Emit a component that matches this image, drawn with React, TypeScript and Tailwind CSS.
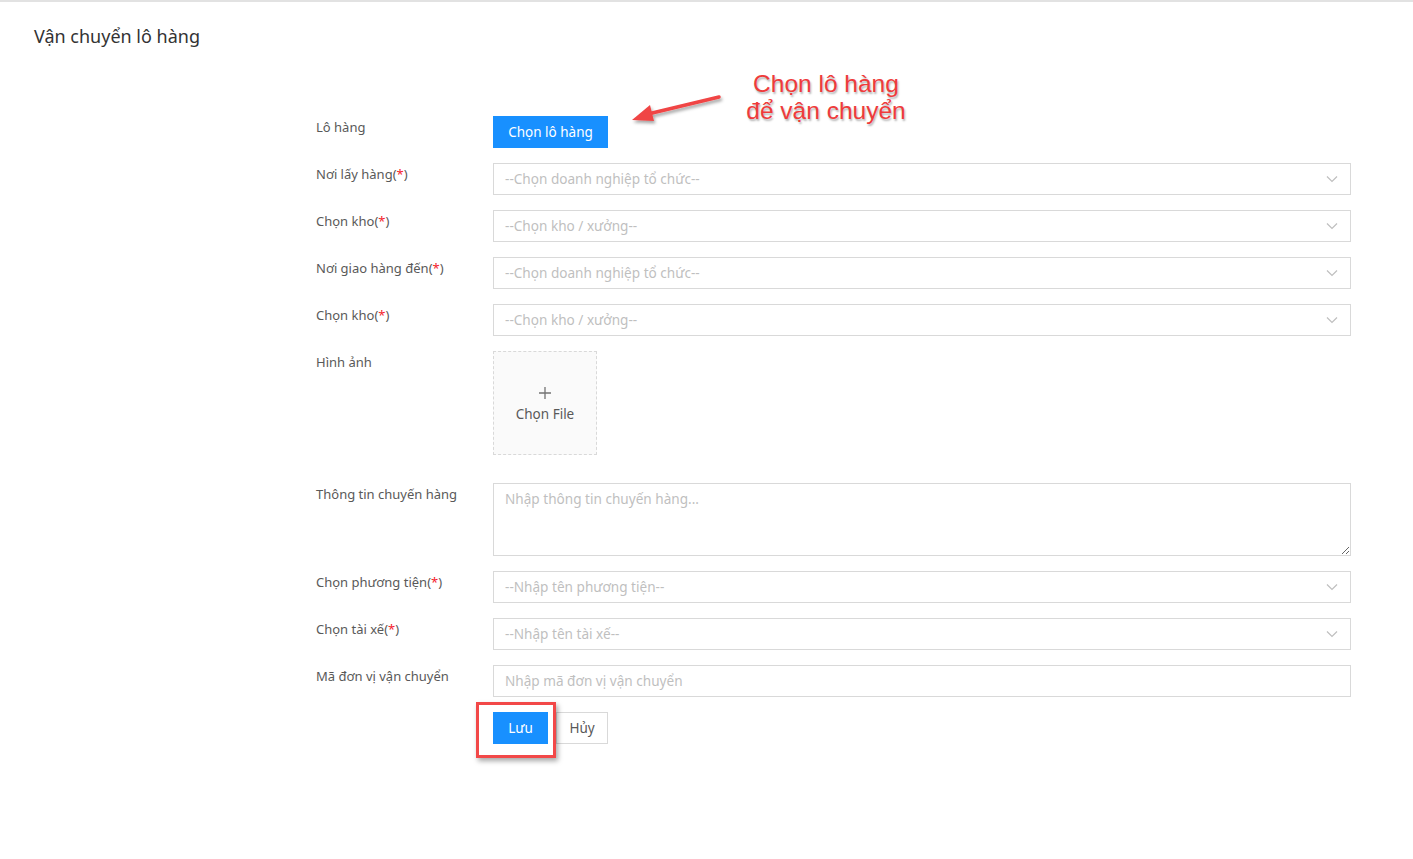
import React from "react";

const Chevron = () => (
  <svg width="12" height="8" viewBox="0 0 12 8" className="shrink-0">
    <path d="M1 1.5 L6 6.5 L11 1.5" fill="none" stroke="#bfbfbf" strokeWidth="1.2" />
  </svg>
);

const Label = ({ text, req }: { text: string; req?: boolean }) => (
  <div className="w-[177px] shrink-0 text-[13px] leading-[22px] text-[#595959]">
    {text}
    {req && (
      <>
        (<span className="text-[#f5222d]">*</span>)
      </>
    )}
  </div>
);

const Select = ({ ph }: { ph: string }) => (
  <div className="flex h-[32px] w-[858px] items-center justify-between border border-[#d9d9d9] bg-white pl-[11px] pr-[12px] text-[13.6px] text-[#bfbfbf]">
    <span>{ph}</span>
    <Chevron />
  </div>
);

export default function App() {
  return (
    <div
      className="relative min-h-[859px] w-[1413px] border-t-2 border-[#e2e2e2] bg-white"
      style={{ fontFamily: '"Noto Sans", "Open Sans", sans-serif' }}
    >
      <div className="pl-[34px] pt-[20px] text-[18px] leading-[28px] text-[#333]">Vận chuyển lô hàng</div>

      <div className="ml-[316px] mt-[66px] flex flex-col">
        <div className="mb-[15px] flex">
          <Label text="Lô hàng" />
          <div className="flex h-[32px] w-[115px] items-center justify-center bg-[#1890ff] text-[13.5px] text-white">
            Chọn lô hàng
          </div>
        </div>
        <div className="mb-[15px] flex">
          <Label text="Nơi lấy hàng" req />
          <Select ph="--Chọn doanh nghiệp tổ chức--" />
        </div>
        <div className="mb-[15px] flex">
          <Label text="Chọn kho" req />
          <Select ph="--Chọn kho / xưởng--" />
        </div>
        <div className="mb-[15px] flex">
          <Label text="Nơi giao hàng đến" req />
          <Select ph="--Chọn doanh nghiệp tổ chức--" />
        </div>
        <div className="mb-[15px] flex">
          <Label text="Chọn kho" req />
          <Select ph="--Chọn kho / xưởng--" />
        </div>
        <div className="mb-[28px] flex">
          <Label text="Hình ảnh" />
          <div className="flex h-[104px] w-[104px] flex-col items-center justify-center border border-dashed border-[#d9d9d9] bg-[#fafafa] pt-[4px] text-[#595959]">
            <svg width="14" height="14" viewBox="0 0 14 14">
              <path d="M7 1 V13 M1 7 H13" stroke="#737373" strokeWidth="1.3" />
            </svg>
            <div className="mt-[4px] text-[13.5px] leading-[20px]">Chọn File</div>
          </div>
        </div>
        <div className="mb-[15px] flex">
          <Label text="Thông tin chuyến hàng" />
          <textarea
            className="block h-[73px] w-[858px] border border-[#d9d9d9] px-[11px] py-[5px] text-[13.6px] text-[#595959] outline-none placeholder:text-[#bfbfbf]"
            placeholder="Nhập thông tin chuyến hàng..."
          />
        </div>
        <div className="mb-[15px] flex">
          <Label text="Chọn phương tiện" req />
          <Select ph="--Nhập tên phương tiện--" />
        </div>
        <div className="mb-[15px] flex">
          <Label text="Chọn tài xế" req />
          <Select ph="--Nhập tên tài xế--" />
        </div>
        <div className="mb-[15px] flex">
          <Label text="Mã đơn vị vận chuyển" />
          <div className="flex h-[32px] w-[858px] items-center border border-[#d9d9d9] px-[11px] text-[13.6px] text-[#bfbfbf]">
            Nhập mã đơn vị vận chuyển
          </div>
        </div>
        <div className="flex gap-[8px] pl-[177px]">
          <div className="flex h-[32px] w-[55px] items-center justify-center bg-[#1890ff] text-[13.5px] text-white">
            Lưu
          </div>
          <div className="flex h-[32px] w-[52px] items-center justify-center border border-[#d9d9d9] bg-white text-[13.5px] text-[#595959]">
            Hủy
          </div>
        </div>
      </div>

      {/* Annotations */}
      <div className="absolute left-[476px] top-[700px] h-[56px] w-[80px] border-[3px] border-[#f24848] shadow-[2px_3px_5px_rgba(0,0,0,0.35)]" />

      <svg className="absolute left-[620px] top-[85px]" width="110" height="45" viewBox="0 0 110 45">
        <defs>
          <filter id="sh" x="-20%" y="-50%" width="140%" height="200%">
            <feDropShadow dx="1.5" dy="2.5" stdDeviation="1.5" floodColor="#000" floodOpacity="0.35" />
          </filter>
        </defs>
        <g filter="url(#sh)">
          <path d="M99 10 L28 27" stroke="#f04444" strokeWidth="3.5" strokeLinecap="round" />
          <path d="M12 33 L30 18 L34 34 Z" fill="#f04444" />
        </g>
      </svg>

      <div
        className="absolute left-[730px] top-[68px] w-[192px] text-center text-[24.5px] leading-[27px] text-[#ef3b3b]"
        style={{ fontFamily: '"Liberation Sans", Arial, sans-serif', textShadow: "1px 2px 2px rgba(0,0,0,0.3)" }}
      >
        Chọn lô hàng
        <br />
        để vận chuyển
      </div>
    </div>
  );
}
